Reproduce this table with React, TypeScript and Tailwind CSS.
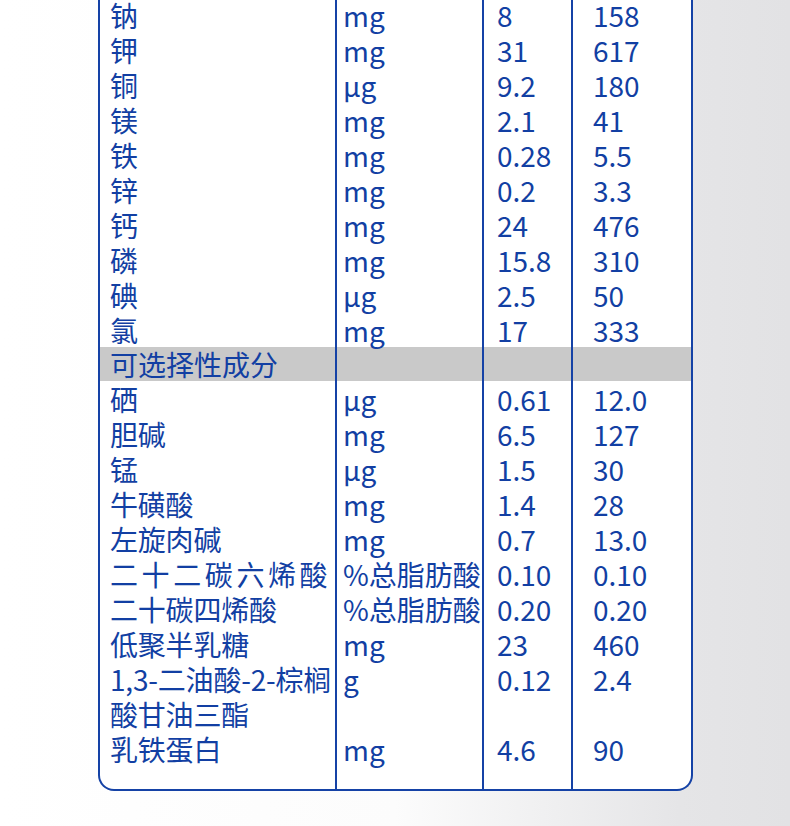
import React from "react";

type Row = { n: string[]; u: string; a: string; b: string; h?: string; wide?: boolean };

const top: Row[] = [
  { n: ["钠"], u: "mg", a: "8", b: "158" },
  { n: ["钾"], u: "mg", a: "31", b: "617" },
  { n: ["铜"], u: "μg", a: "9.2", b: "180" },
  { n: ["镁"], u: "mg", a: "2.1", b: "41" },
  { n: ["铁"], u: "mg", a: "0.28", b: "5.5" },
  { n: ["锌"], u: "mg", a: "0.2", b: "3.3" },
  { n: ["钙"], u: "mg", a: "24", b: "476" },
  { n: ["磷"], u: "mg", a: "15.8", b: "310" },
  { n: ["碘"], u: "μg", a: "2.5", b: "50" },
  { n: ["氯"], u: "mg", a: "17", b: "333" },
];

const bottom: Row[] = [
  { n: ["硒"], u: "μg", a: "0.61", b: "12.0" },
  { n: ["胆碱"], u: "mg", a: "6.5", b: "127" },
  { n: ["锰"], u: "μg", a: "1.5", b: "30" },
  { n: ["牛磺酸"], u: "mg", a: "1.4", b: "28" },
  { n: ["左旋肉碱"], u: "mg", a: "0.7", b: "13.0" },
  { n: ["二十二碳六烯酸"], u: "%总脂肪酸", a: "0.10", b: "0.10", wide: true },
  { n: ["二十碳四烯酸"], u: "%总脂肪酸", a: "0.20", b: "0.20" },
  { n: ["低聚半乳糖"], u: "mg", a: "23", b: "460" },
  { n: ["1,3-二油酸-2-棕榈", "酸甘油三酯"], u: "g", a: "0.12", b: "2.4" },
  { n: ["乳铁蛋白"], u: "mg", a: "4.6", b: "90", h: "h-[58px]" },
];

function TableRow({ r }: { r: Row }) {
  return (
    <div className={`flex ${r.h ?? ""}`}>
      <div className="w-[235px] pl-[10px]">
        {r.n.map((t) => (
          <div
            key={t}
            className={`h-[35px] pt-[2px] leading-[33px] whitespace-nowrap ${r.wide ? "tracking-[3.6px]" : "tracking-[-0.2px]"}`}
          >
            {t}
          </div>
        ))}
      </div>
      <div className="w-[147px] border-l-2 border-[#1542a6] pl-[6px]">
        <div className="h-[35px] pt-[2px] leading-[33px] whitespace-nowrap">{r.u}</div>
      </div>
      <div className="w-[89px] border-l-2 border-[#1542a6] pl-[13px]">
        <div className="h-[35px] pt-[2px] leading-[33px]">{r.a}</div>
      </div>
      <div className="w-[119px] border-l-2 border-[#1542a6] pl-[20px]">
        <div className="h-[35px] pt-[2px] leading-[33px]">{r.b}</div>
      </div>
    </div>
  );
}

export default function App() {
  return (
    <div
      className="w-[790px] h-[826px] overflow-hidden bg-[linear-gradient(to_right,#ffffff_0%,#fcfcfc_50%,#e5e5e7_86%,#e2e2e4_100%)] text-[28px] text-[#123fa3]"
      style={{ fontFamily: '"Noto Sans CJK SC", "Noto Sans", sans-serif' }}
    >
      <div className="ml-[98px] mt-[-3px] w-[595px] bg-white border-2 border-t-0 border-[#1542a6] rounded-b-[16px]">
        {top.map((r) => (
          <TableRow key={r.n[0]} r={r} />
        ))}
        <div className="flex bg-[#c9c9c9] h-[34px]">
          <div className="w-[235px] pl-[10px] pt-[1px] leading-[33px] whitespace-nowrap">可选择性成分</div>
          <div className="w-[147px] border-l-2 border-[#1542a6]" />
          <div className="w-[89px] border-l-2 border-[#1542a6]" />
          <div className="w-[119px] border-l-2 border-[#1542a6]" />
        </div>
        {bottom.map((r) => (
          <TableRow key={r.n[0]} r={r} />
        ))}
      </div>
    </div>
  );
}
